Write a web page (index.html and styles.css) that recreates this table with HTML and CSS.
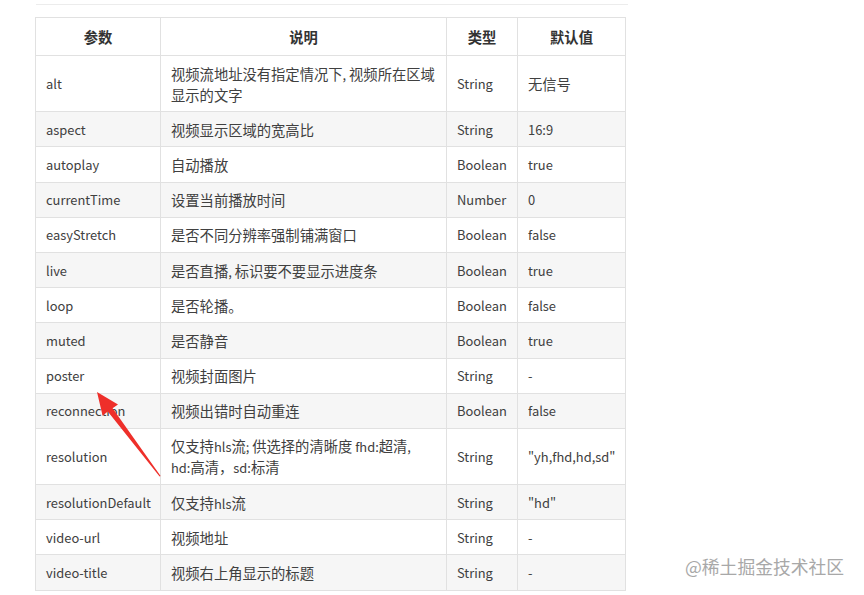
FILE: index.html
```html
<!DOCTYPE html>
<html lang="zh">
<head>
<meta charset="utf-8">
<link rel="stylesheet" href="styles.css">
</head>
<body>
<div class="page">
  <div class="rule"></div>
  <table class="props">
    <colgroup>
      <col class="c1"><col class="c2"><col class="c3"><col class="c4">
    </colgroup>
    <thead>
      <tr><th>参数</th><th>说明</th><th>类型</th><th>默认值</th></tr>
    </thead>
    <tbody>
      <tr><td>alt</td><td>视频流地址没有指定情况下<span class="lt">, </span>视频所在区域<br>显示的文字</td><td>String</td><td class="cjk">无信号</td></tr>
      <tr><td>aspect</td><td>视频显示区域的宽高比</td><td>String</td><td>16:9</td></tr>
      <tr><td>autoplay</td><td>自动播放</td><td>Boolean</td><td>true</td></tr>
      <tr><td>currentTime</td><td>设置当前播放时间</td><td>Number</td><td>0</td></tr>
      <tr><td>easyStretch</td><td>是否不同分辨率强制铺满窗口</td><td>Boolean</td><td>false</td></tr>
      <tr><td>live</td><td>是否直播<span class="lt">, </span>标识要不要显示进度条</td><td>Boolean</td><td>true</td></tr>
      <tr><td>loop</td><td>是否轮播。</td><td>Boolean</td><td>false</td></tr>
      <tr><td>muted</td><td>是否静音</td><td>Boolean</td><td>true</td></tr>
      <tr><td>poster</td><td>视频封面图片</td><td>String</td><td>-</td></tr>
      <tr><td>reconnection</td><td>视频出错时自动重连</td><td>Boolean</td><td>false</td></tr>
      <tr><td>resolution</td><td>仅支持<span class="lt">hls</span>流<span class="lt">; </span>供选择的清晰度<span class="lt"> fhd:</span>超清<span class="lt">,</span><br><span class="lt">hd:</span>高清，<span class="lt">sd:</span>标清</td><td>String</td><td>"yh,fhd,hd,sd"</td></tr>
      <tr><td>resolutionDefault</td><td>仅支持<span class="lt">hls</span>流</td><td>String</td><td>"hd"</td></tr>
      <tr><td>video-url</td><td>视频地址</td><td>String</td><td>-</td></tr>
      <tr><td>video-title</td><td>视频右上角显示的标题</td><td>String</td><td>-</td></tr>
    </tbody>
  </table>
  <svg class="arrow" width="864" height="595" viewBox="0 0 864 595" aria-hidden="true">
    <polygon points="97,392 118,404.5 112.6,408.3 160.6,476 159.6,476.6 107.8,411.6 102.6,415.8" fill="#ee2f2a"/>
  </svg>
  <div class="watermark">@稀土掘金技术社区</div>
</div>
</body>
</html>
```
FILE: styles.css
```css
html, body {
  margin: 0;
  padding: 0;
  background: #ffffff;
}
body {
  font-family: "Noto Sans CJK SC", "Noto Sans", sans-serif;
  color: #404040;
  font-size: 14px;
}
.page {
  position: relative;
  width: 864px;
  height: 595px;
  overflow: hidden;
  padding-left: 35px;
  box-sizing: border-box;
}
.rule {
  width: 592px;
  height: 4px;
  border-bottom: 1px solid #ececec;
  margin-bottom: 12px;
  margin-left: 1px;
}
.props {
  border-collapse: collapse;
  width: 590px;
  table-layout: fixed;
}
.c1 { width: 125px; }
.c2 { width: 286px; }
.c3 { width: 71px; }
.c4 { width: 108px; }
.props th, .props td {
  border: 1px solid #e1e1e1;
  line-height: 21px;
  height: 21px;
  vertical-align: middle;
}
.props th {
  padding: 8px 10px;
  font-size: 14.3px;
  font-weight: bold;
  color: #333333;
  text-align: center;
  background: #ffffff;
}
.props td {
  padding: 6.6px 10px;
  text-align: left;
  white-space: nowrap;
  font-size: 14.3px;
}
.props td:nth-child(1),
.props td:nth-child(3),
.props td:nth-child(4) {
  font-size: 12.9px;
}
.props td.cjk {
  font-size: 14.3px;
}
.lt {
  font-size: 12.9px;
  line-height: 1;
}
.props tbody tr:nth-child(even) td {
  background: #f6f6f6;
}
.arrow {
  position: absolute;
  left: 0;
  top: 0;
  pointer-events: none;
}
.watermark {
  position: absolute;
  left: 685px;
  top: 554px;
  font-size: 17.8px;
  line-height: 24px;
  color: #a8a8a8;
}
```
